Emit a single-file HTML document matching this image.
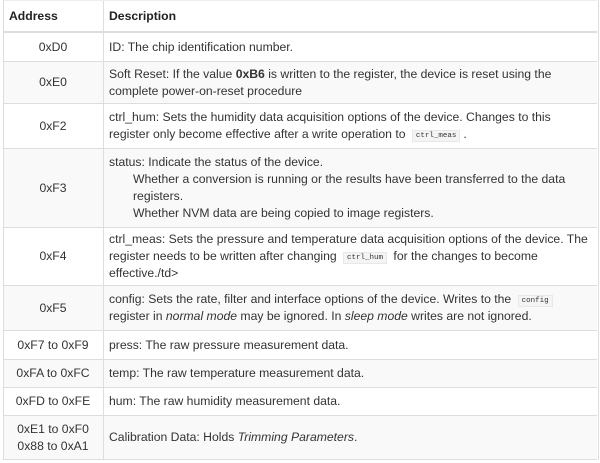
<!DOCTYPE html>
<html><head><meta charset="utf-8"><style>
html,body{margin:0;padding:0;background:#fff;width:600px;height:463px;overflow:hidden}
body{font-family:"Liberation Sans",Arial,sans-serif;font-size:12.2px;color:#333}
.t{position:absolute;left:3px;width:594px;border-left:1px solid #ddd;border-right:1px solid #ddd}
.r{position:absolute;left:3px;width:594px;border-top:1px solid #ddd;box-sizing:border-box}
.g{background:#f9f9f9}
.a{position:absolute;left:0;width:100px;height:100%;display:flex;align-items:center;justify-content:center;text-align:center;line-height:17px}
.d{position:absolute;left:100px;right:0;height:100%;border-left:1px solid #ddd;display:flex;flex-direction:column;justify-content:center;padding-left:5px;line-height:17px;white-space:nowrap;box-sizing:border-box}
.d>div{height:17px}
code{font-family:"Liberation Mono",monospace;font-size:7.5px;line-height:10px;display:inline-block;vertical-align:1px;background:#f4f4f4;border:1px solid #e8e8e8;padding:0 3px;margin:0 3px}
.h{font-weight:bold;color:#222}
.ind{padding-left:24px}
</style></head><body>
<div class="r" style="top:0;height:31px;border-top:1px solid #eee"><div class="a h" style="justify-content:flex-start;padding-left:6px;box-sizing:border-box">Address</div><div class="d h"><div>Description</div></div></div>
<div class="r" style="top:31px;height:30px;border-top:2px solid #ddd"><div class="a">0xD0</div><div class="d"><div>ID: The chip identification number.</div></div></div>
<div class="r g" style="top:61px;height:42px"><div class="a">0xE0</div><div class="d"><div>Soft Reset: If the value <b>0xB6</b> is written to the register, the device is reset using the</div><div>complete power-on-reset procedure</div></div></div>
<div class="r" style="top:103px;height:45px"><div class="a">0xF2</div><div class="d"><div>ctrl_hum: Sets the humidity data acquisition options of the device. Changes to this</div><div>register only become effective after a write operation to <code>ctrl_meas</code>.</div></div></div>
<div class="r g" style="top:148px;height:79px"><div class="a">0xF3</div><div class="d"><div>status: Indicate the status of the device.</div><div class="ind">Whether a conversion is running or the results have been transferred to the data</div><div class="ind">registers.</div><div class="ind">Whether NVM data are being copied to image registers.</div></div></div>
<div class="r" style="top:227px;height:58px"><div class="a">0xF4</div><div class="d"><div>ctrl_meas: Sets the pressure and temperature data acquisition options of the device. The</div><div>register needs to be written after changing <code>ctrl_hum</code> for the changes to become</div><div>effective./td&gt;</div></div></div>
<div class="r g" style="top:285px;height:45px"><div class="a">0xF5</div><div class="d"><div>config: Sets the rate, filter and interface options of the device. Writes to the <code>config</code></div><div>register in <i>normal mode</i> may be ignored. In <i>sleep mode</i> writes are not ignored.</div></div></div>
<div class="r" style="top:330px;height:29px"><div class="a">0xF7 to 0xF9</div><div class="d"><div>press: The raw pressure measurement data.</div></div></div>
<div class="r g" style="top:359px;height:28px"><div class="a">0xFA to 0xFC</div><div class="d"><div>temp: The raw temperature measurement data.</div></div></div>
<div class="r" style="top:387px;height:28px"><div class="a">0xFD to 0xFE</div><div class="d"><div>hum: The raw humidity measurement data.</div></div></div>
<div class="r g" style="top:415px;height:45px;border-bottom:1px solid #ddd"><div class="a">0xE1 to 0xF0<br>0x88 to 0xA1</div><div class="d"><div>Calibration Data: Holds <i>Trimming Parameters</i>.</div></div></div>
<div class="t" style="top:0;height:460px"></div>
</body></html>
